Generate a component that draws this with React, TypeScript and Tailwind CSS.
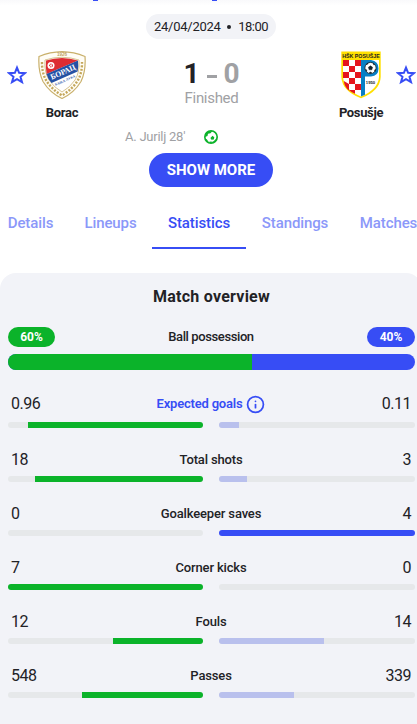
import { Info } from 'lucide-react';
import clsx from 'clsx';

type Stat = {
  label: string;
  home: string;
  away: string;
  homeShare: number;
  awayShare: number;
  info?: boolean;
};

const stats: Stat[] = [
  { label: 'Expected goals', home: '0.96', away: '0.11', homeShare: 89.7, awayShare: 10.2, info: true },
  { label: 'Total shots', home: '18', away: '3', homeShare: 86.2, awayShare: 14.3 },
  { label: 'Goalkeeper saves', home: '0', away: '4', homeShare: 0, awayShare: 100 },
  { label: 'Corner kicks', home: '7', away: '0', homeShare: 100, awayShare: 0 },
  { label: 'Fouls', home: '12', away: '14', homeShare: 46.2, awayShare: 53.8 },
  { label: 'Passes', home: '548', away: '339', homeShare: 62, awayShare: 38.2 },
];

const tabs = [
  { name: 'Details', width: 'w-[45px]' },
  { name: 'Lineups', width: 'w-[51px]' },
  { name: 'Statistics', width: 'w-[62px]' },
  { name: 'Standings', width: 'w-[66px]' },
  { name: 'Matches', width: 'w-[57px]' },
];

function StarIcon() {
  return (
    <svg viewBox="0 0 20 20" className="h-5 w-5 shrink-0" fill="none" stroke="#374df5" strokeWidth="2">
      <path d="M10 2.6 12.1 7.8 17.9 8.2 13.5 11.8 15 17.2 10 14.2 5 17.2 6.5 11.8 2.1 8.2 7.9 7.8Z" />
    </svg>
  );
}

function BoracCrest() {
  return (
    <svg viewBox="0 0 48 48" className="h-12 w-12">
      <path d="M1 5.5Q12 .8 24 .6 36 .8 47 5.5 48 20 43 30.5 36 42 24 47.5 12 42 5 30.5 0 20 1 5.5Z" fill="#fffdf6" stroke="#c9b06b" strokeWidth="1.2" />
      <path d="M4 11Q3.8 22 8.500 30 14 38.500 24 44.500 34 38.500 39.500 30 44.200 22 44 11" fill="none" stroke="#c4a75c" strokeWidth="2.4" strokeDasharray="2 1.5" />
      <path d="M7 9Q24 3.5 41 9 42 21 37 29 32 36.5 24 41 16 36.5 11 29 6 21 7 9Z" fill="#fff" stroke="#cdb577" strokeWidth=".8" />
      <path d="M8 9.5Q24 4.5 40 9.5L8.600 23Q7.400 16 8 9.5Z" fill="#dd2c32" />
      <path d="M8.500 23 40 9.500Q40.800 15 39.600 20.500L13.500 32Q9.800 28 8.500 23Z" fill="#2451a4" />
      <circle cx="13" cy="14.5" r="3.5" fill="#fff" />
      <circle cx="13" cy="14.5" r="1.4" fill="none" stroke="#dd2c32" strokeWidth="1.1" strokeDasharray="1.2 .5" />
      <text x="25" y="23.5" transform="rotate(-24 25 21)" textAnchor="middle" fontSize="7.8" fontWeight="700" fill="#fff" fontFamily="Liberation Serif, serif">БОРАЦ</text>
      <text x="27" y="30.5" transform="rotate(-24 27 29)" textAnchor="middle" fontSize="3.5" fontWeight="700" fill="#3762ad" fontFamily="Liberation Serif, serif">БАЊА ЛУКА</text>
      <text x="24" y="5.2" textAnchor="middle" fontSize="4.5" fontWeight="700" fill="#bda05a" fontFamily="Liberation Sans, sans-serif">1926</text>
    </svg>
  );
}

function PosusjeCrest() {
  return (
    <svg viewBox="0 0 40 48" className="h-12 w-10">
      <path d="M.3.5H39.7V26Q39 40 20 47.3 1 40 .3 26Z" fill="#ffe000" />
      <path d="M2 9H38V26Q37 38.5 20 45.5 3 38.5 2 26Z" fill="#fff" />
      <path d="M2 9H8V15H2ZM14 9H20V15H14ZM8 15H14V21H8ZM2 21H8V27H2ZM14 21H20V27H14ZM8 27H14V33H8ZM2.800 30 8 33V39.500Q3.500 36 2.800 30ZM14 33H20V39H14ZM8 39H14V42.700Q10 41 8 39Z" fill="#e5151d" />
      <path d="M20 9H30Q37.5 10 37.5 17.5 37.5 25 30 25.5H24V43.800L20 45.500Z" fill="#087fc5" />
      <circle cx="29.5" cy="17" r="5.6" fill="#fff" stroke="#15202a" strokeWidth=".8" />
      <path d="m29.500 14.800 2.100 1.500-.8 2.500h-2.600l-.8-2.500ZM25 13.600l1.600-1.500.6.8ZM32 12l2 1.700-1.400.1ZM24.500 18.500l1.300.4-.2 1.500ZM33.500 19l1.200-.5-.7 2ZM28.300 21.500l1.200-.5 1.200.5-1.200 1Z" fill="#15202a" stroke="#15202a" strokeWidth=".5" />
      <text x="20" y="7.2" textAnchor="middle" fontSize="5.3" fontWeight="700" fill="#222" fontFamily="Liberation Sans, sans-serif">HŠK POSUŠJE</text>
      <text x="29.5" y="32.8" textAnchor="middle" fontSize="4.2" fontWeight="700" fill="#222" fontFamily="Liberation Sans, sans-serif">1950</text>
    </svg>
  );
}

function GoalIcon() {
  return (
    <svg viewBox="0 0 14 14" className="h-3.5 w-3.5">
      <circle cx="7" cy="7" r="6.2" fill="#fff" stroke="#0bb32a" strokeWidth="1.6" />
      <path d="M4.500 1.200 8.500 1 6.500 3.200 4 3.800 3.500 6 1 7 1.500 3.500ZM1.300 8.500 3 9.500 4.500 12 2.500 11.500ZM12.800 7 12.500 10 10 12.500 5.800 13 5.500 11.500 9 11.800 11.500 9.500ZM8.500 5.800 10.300 7.300 9.800 9.500 7.500 9.800 6.400 8Z" fill="#0bb32a" />
    </svg>
  );
}

function StatRow({ stat }: { stat: Stat }) {
  return (
    <div className={clsx('flex flex-col justify-end', stat.info ? 'h-[58px]' : 'h-[54px]')}>
      <div className={clsx('mb-1.5 grid grid-cols-[1fr_auto_1fr] items-center pr-1 pl-[3px]', stat.info ? 'h-6' : 'h-5')}>
        <span className="text-base leading-5 tracking-[-0.5px]">{stat.home}</span>
        <span
          className={clsx(
            'flex items-center text-[13px] leading-4',
            stat.info ? 'gap-1 font-semibold tracking-[-0.2px] text-[#374df5]' : 'font-medium tracking-[-0.15px]'
          )}
        >
          {stat.label}
          {stat.info && <Info className="h-[19px] w-[19px]" strokeWidth={2.2} />}
        </span>
        <span className="text-right text-base leading-5 tracking-[-0.5px]">{stat.away}</span>
      </div>
      <div className="grid grid-cols-[195px_196px] gap-4">
        <div className="flex h-1.5 justify-end overflow-hidden rounded-full bg-[#e6e8ea]">
          <div className="bg-[#0bb32a]" style={{ width: `${stat.homeShare}%` }} />
        </div>
        <div className="flex h-1.5 overflow-hidden rounded-full bg-[#e6e8ea]">
          <div
            className={stat.awayShare === 100 ? 'bg-[#374df5]' : 'bg-[#b9c0ed]'}
            style={{ width: `${stat.awayShare}%` }}
          />
        </div>
      </div>
    </div>
  );
}

export default function App() {
  return (
    <div className="h-[724px] w-full overflow-hidden bg-white font-[Roboto,sans-serif] text-[#222226]">
      <div className="flex h-full w-[422px] flex-col">
        <div className="flex h-3.5 shrink-0 items-start bg-linear-to-b from-[#f9f9fb] to-white to-40% pl-[93px]">
          <span className="h-px w-[5px] bg-[#374df5]" />
          <span className="ml-[114px] h-px w-[5px] bg-[#374df5]" />
        </div>

        <div className="flex h-[25px] shrink-0 justify-center">
          <div className="flex w-[130px] items-center justify-between rounded-full bg-[#f2f3f7] px-2 text-[13px]">
            <span className="tracking-[-0.25px]">24/04/2024</span>
            <span className="h-1 w-1 rounded-full bg-[#222226]" />
            <span className="tracking-[-0.5px]">18:00</span>
          </div>
        </div>

        <div className="flex h-[85px] shrink-0 justify-between pr-1.5 pl-[7px]">
          <div className="flex gap-[11px] pt-3">
            <div className="pt-3.5">
              <StarIcon />
            </div>
            <div className="flex w-12 flex-col items-center">
              <BoracCrest />
              <span className="mt-1.5 text-[13px] leading-4 font-bold tracking-[-0.25px]">Borac</span>
            </div>
          </div>
          <div className="flex flex-col items-center pt-[19px]">
            <div className="flex items-center gap-[7px] text-[28px] leading-8 font-bold">
              <span>1</span>
              <span className="mt-1 h-[3px] w-2.5 bg-[#a0a1a4]" />
              <span className="text-[#a0a1a4]">0</span>
            </div>
            <span className="text-[15px] leading-4 tracking-[-0.3px] text-[#a0a1a4]">Finished</span>
          </div>
          <div className="flex gap-[11px] pt-3">
            <div className="flex w-12 flex-col items-center">
              <PosusjeCrest />
              <span className="mt-1.5 text-[13px] leading-4 font-bold tracking-[-0.35px]">Posušje</span>
            </div>
            <div className="pt-3.5">
              <StarIcon />
            </div>
          </div>
        </div>

        <div className="flex h-[29px] shrink-0 items-center gap-[18px] pb-[3px] pl-[125px]">
          <span className="w-[61px] text-[13px] tracking-[-0.25px] whitespace-nowrap text-[#a0a1a4]">A. Jurilj 28'</span>
          <GoalIcon />
        </div>

        <div className="flex h-[34px] shrink-0 justify-center">
          <button className="w-[124px] rounded-full bg-[#374df5] text-[15px] font-bold text-white">SHOW MORE</button>
        </div>

        <div className="mt-2.5 flex h-[52px] shrink-0 pl-2">
          {tabs.map((tab) => (
            <div
              key={tab.name}
              className={clsx(
                'mr-4 -ml-4 box-content flex shrink-0 items-center justify-center border-b-2 px-4 pt-0.5 text-[15px] font-medium tracking-[-0.1px]',
                tab.width,
                tab.name === 'Statistics' ? 'border-[#374df5] text-[#374df5]' : 'border-transparent text-[#8b98f9]'
              )}
            >
              {tab.name}
            </div>
          ))}
        </div>

        <section className="mt-6 flex grow flex-col rounded-t-2xl bg-[#f2f3f8] pt-[15px] pr-[7px] pl-2">
          <h2 className="text-center text-base leading-[18px] font-bold tracking-[0.25px]">Match overview</h2>
          <div className="mt-[21px] flex h-5 items-center justify-between">
            <span className="flex h-5 w-[47px] items-center justify-center rounded-full bg-[#0bb32a] text-xs font-bold text-white">60%</span>
            <span className="text-[13px] font-medium tracking-[-0.4px]">Ball possession</span>
            <span className="flex h-5 w-12 items-center justify-center rounded-full bg-[#374df5] text-xs font-bold text-white">40%</span>
          </div>
          <div className="mt-[7px] flex h-4 shrink-0 overflow-hidden rounded-full bg-[#374df5]">
            <div className="w-[60%] bg-[#0bb32a]" />
          </div>
          {stats.map((stat) => (
            <StatRow key={stat.label} stat={stat} />
          ))}
        </section>
      </div>
    </div>
  );
}
